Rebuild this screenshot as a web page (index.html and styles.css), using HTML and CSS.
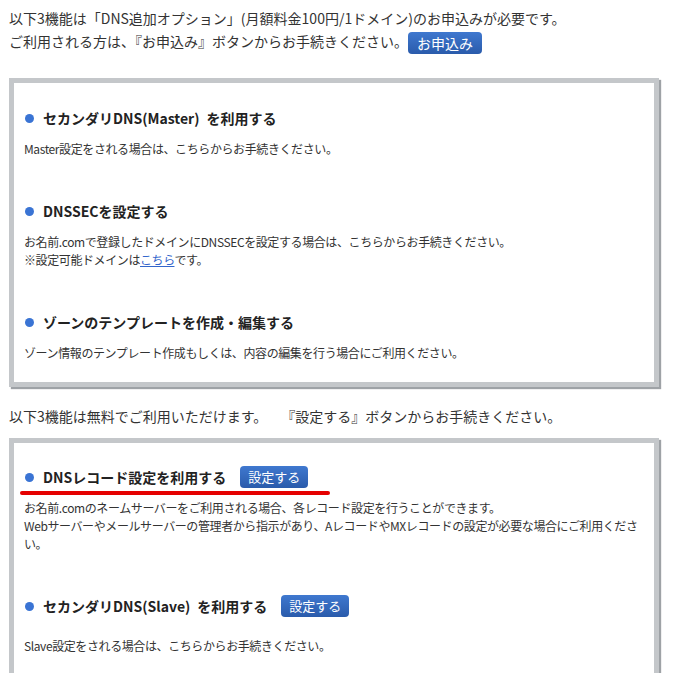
FILE: index.html
```html
<!DOCTYPE html>
<html lang="ja">
<head>
  <meta charset="UTF-8">
  <title>DNS関連機能の設定</title>
  <link rel="stylesheet" href="styles.css">
</head>
<body>

  <p class="lead">
    以下3機能は「DNS追加オプション」(月額料金100円/1ドメイン)のお申込みが必要です。<br>
    ご利用される方は、『お申込み』ボタンからお手続きください。<a class="btn btn-apply" href="#">お申込み</a>
  </p>

  <!-- 有料オプション -->
  <div class="panel">
    <div class="item">
      <h2 class="item-title">セカンダリDNS(Master)&ensp;を利用する</h2>
      <p class="item-text">Master設定をされる場合は、こちらからお手続きください。</p>
    </div>
    <div class="item">
      <h2 class="item-title">DNSSECを設定する</h2>
      <p class="item-text">お名前.comで登録したドメインにDNSSECを設定する場合は、こちらからお手続きください。<br>※設定可能ドメインは<a href="#">こちら</a>です。</p>
    </div>
    <div class="item">
      <h2 class="item-title">ゾーンのテンプレートを作成・編集する</h2>
      <p class="item-text">ゾーン情報のテンプレート作成もしくは、内容の編集を行う場合にご利用ください。</p>
    </div>
  </div>

  <p class="lead lead-free">以下3機能は無料でご利用いただけます。　　『設定する』ボタンからお手続きください。</p>

  <!-- 無料機能 -->
  <div class="panel panel-free">
    <div class="item">
      <h2 class="item-title marked">DNSレコード設定を利用する<a class="btn" href="#">設定する</a></h2>
      <p class="item-text">お名前.comのネームサーバーをご利用される場合、各レコード設定を行うことができます。<br>Webサーバーやメールサーバーの管理者から指示があり、AレコードやMXレコードの設定が必要な場合にご利用ください。</p>
    </div>
    <div class="item">
      <h2 class="item-title">セカンダリDNS(Slave)&ensp;を利用する<a class="btn" href="#">設定する</a></h2>
      <p class="item-text item-text-wide">Slave設定をされる場合は、こちらからお手続きください。</p>
    </div>
  </div>

</body>
</html>
```

FILE: styles.css
```css
body {
  margin: 0;
  padding: 0;
  font-family: "Noto Sans CJK JP", "Noto Sans", sans-serif;
  color: #333;
  background-color: #fff;
}

.lead {
  margin: 0;
  padding: 7px 9px 0;
  font-size: 14px;
  line-height: 23px;
}

.lead-free {
  padding-top: 0;
  margin-top: 18px;
}

.btn {
  display: inline-block;
  margin-left: 14px;
  padding: 0 8px;
  height: 22px;
  line-height: 22px;
  font-size: 13px;
  font-weight: normal;
  color: #fff;
  text-decoration: none;
  vertical-align: middle;
  border-radius: 4px;
  background: linear-gradient(#3f78cf, #2a5bab);
}

.btn-apply {
  font-size: 14px;
  padding: 0 9px;
  margin-left: 0;
}

.panel {
  margin: 24px 18px 0 9px;
  padding: 24px 10px 20px;
  border: 5px solid #c4c7ca;
  box-shadow: 2px 2px 1px #9ea2a6;
  background-color: #fff;
}

.panel-free {
  margin-top: 10px;
  padding-top: 23px;
}

.item + .item {
  margin-top: 42px;
}

.item-title {
  position: relative;
  margin: 0;
  display: flex;
  align-items: center;
  height: 22px;
  font-size: 14px;
  font-weight: bold;
  color: #222;
}

.item-title::before {
  content: "";
  width: 9px;
  height: 9px;
  margin: 0 9px 0 1px;
  border-radius: 50%;
  background-color: #3a74d4;
}

/* 手書きの赤い下線 */
.item-title.marked::after {
  content: "";
  position: absolute;
  left: -4px;
  bottom: -7px;
  width: 310px;
  height: 4px;
  border-radius: 2px;
  background-color: #e50000;
}

.item-text {
  margin: 11px 0 0;
  font-size: 12px;
  line-height: 18px;
  letter-spacing: -0.4px;
}

.item-text-wide {
  margin-top: 20px;
}

.item-text a {
  color: #3366cc;
}
```
